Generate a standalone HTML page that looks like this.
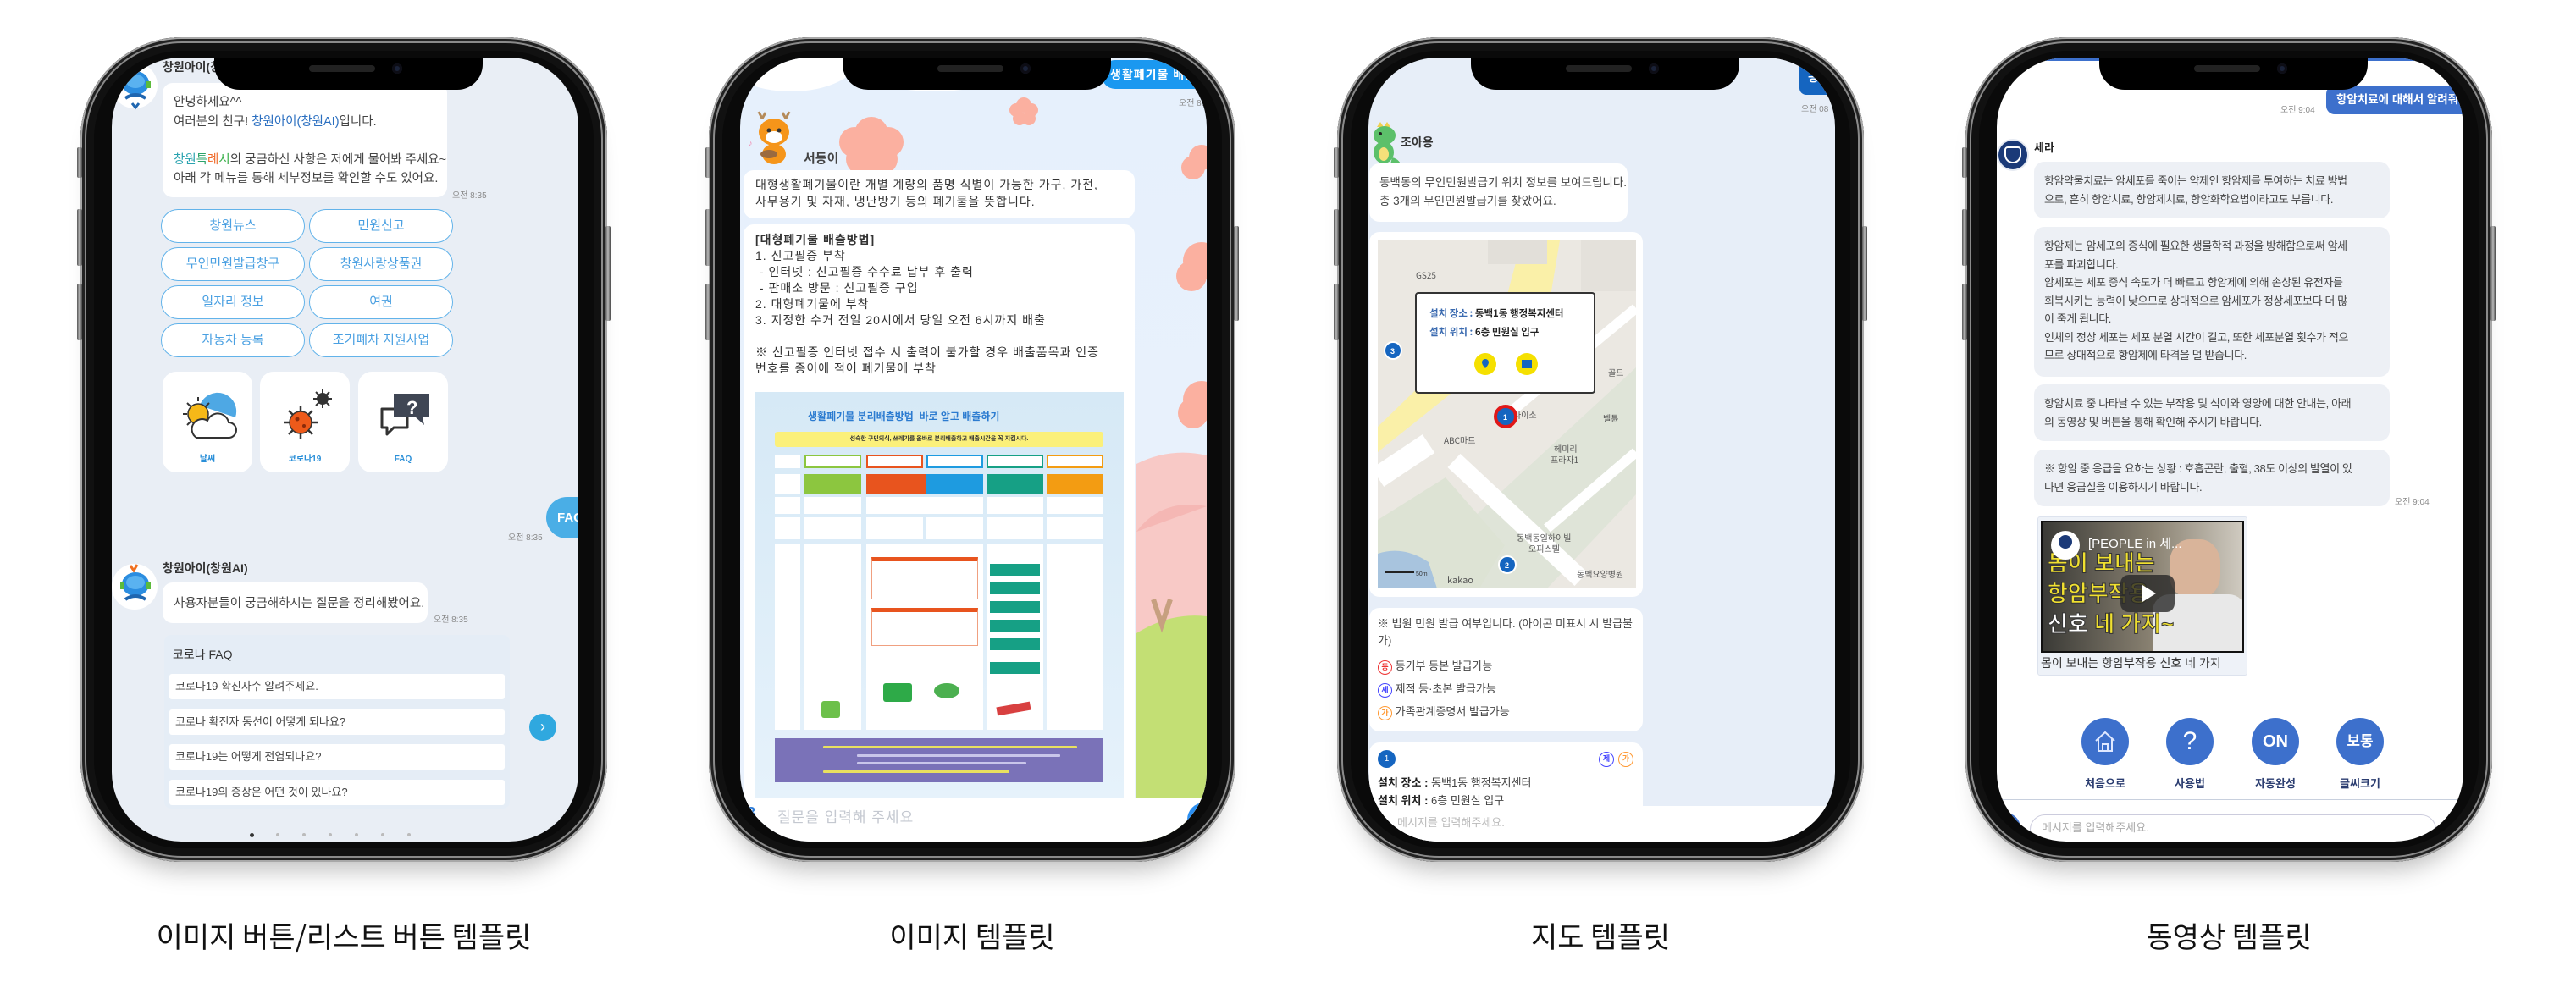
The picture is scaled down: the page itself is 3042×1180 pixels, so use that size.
<!DOCTYPE html>
<html><head><meta charset="utf-8">
<style>
*{margin:0;padding:0;box-sizing:border-box}
body{width:3042px;height:1180px;background:#fff;position:relative;overflow:hidden;font-family:"Liberation Sans","Noto Sans CJK KR",sans-serif;color:#333}
.ph{position:absolute;top:44px;width:622px;height:974px;border-radius:120px;background:#0a0a0a;box-shadow:inset 0 0 0 2px #a8a8a8,inset 0 0 0 5px #222,inset 0 0 0 7px #8a8a8a,inset 0 0 0 16px #111,0 26px 30px -18px rgba(0,0,0,.28)}
.btn{position:absolute;width:6px;background:linear-gradient(90deg,#555,#bbb,#444);border-radius:2px}
.scr{position:absolute;left:37px;top:24px;width:551px;height:926px;border-radius:82px;overflow:hidden}
.notch{position:absolute;left:121px;top:0;width:317px;height:38px;background:#000;border-radius:0 0 30px 30px;z-index:20}
.notch:before{content:"";position:absolute;left:112px;top:9px;width:78px;height:8px;border-radius:4px;background:#222}
.notch:after{content:"";position:absolute;left:210px;top:7px;width:12px;height:12px;border-radius:50%;background:#1a2238;box-shadow:inset 0 0 0 3px #0d0d15}
.t{position:absolute;white-space:nowrap}
.lbl{position:absolute;top:1080px;width:622px;text-align:center;font-size:34px;color:#111;font-family:"Noto Sans CJK KR",sans-serif}
.bub{position:absolute;background:#fff;border-radius:12px}
.ob{position:absolute;height:40px;border:1.5px solid #62b3ea;border-radius:20px;color:#4aa0e2;font-size:15px;text-align:center;line-height:37px;background:#fff}
.card{position:absolute;top:371px;width:106px;height:119px;background:#fff;border-radius:16px}
.card span{position:absolute;bottom:10px;width:100%;text-align:center;font-size:10px;font-weight:bold;color:#2a8fd8}
.tm{position:absolute;font-size:10px;color:#8a8a8a;white-space:nowrap}
.fq{position:absolute;left:6px;width:396px;height:30px;background:#fff;border-radius:3px;font-size:13px;line-height:30px;padding-left:7px;color:#444}
.g{position:absolute;background:#ccd;height:3px;border-radius:1px}
.gb{position:absolute;background:#edf0f5;border-radius:12px;left:44px;width:420px;font-size:13px;letter-spacing:-0.4px;line-height:21.5px;color:#444;padding:12px 12px;white-space:nowrap;overflow:hidden}
.cb{position:absolute;width:56px;height:56px;border-radius:50%;background:#3d70cc;color:#fff;text-align:center;font-weight:bold}
.cl{position:absolute;width:100px;text-align:center;font-size:13px;font-weight:bold;color:#2b3d70}
</style></head><body>

<!-- ============ PHONE 1 ============ -->
<div class="ph" style="left:95px">
 <div class="btn" style="left:-4px;top:130px;height:36px"></div>
 <div class="btn" style="left:-4px;top:203px;height:67px"></div>
 <div class="btn" style="left:-4px;top:291px;height:67px"></div>
 <div class="btn" style="left:620px;top:223px;height:112px"></div>
 <div class="scr" style="background:#e9eef5">
  <div class="notch"></div>
  <div style="position:absolute;left:0;top:6px;width:54px;height:54px;border-radius:50%;background:#fff"></div>
  <svg style="position:absolute;left:2px;top:4px" width="54" height="60" viewBox="0 0 54 60"><path d="M20 4l4 6 4-7" stroke="#f07020" stroke-width="3" fill="none"/><ellipse cx="26" cy="26" rx="16" ry="14" fill="#2b8de0"/><ellipse cx="26" cy="24" rx="11" ry="8" fill="#5ab2f0"/><rect x="8" y="24" width="5" height="8" fill="#5cbb3c"/><rect x="39" y="24" width="5" height="8" fill="#5cbb3c"/><path d="M14 44q12-8 24 0" stroke="#1f66b0" stroke-width="4" fill="none"/><path d="M22 50l4 5 4-5" stroke="#1f66b0" stroke-width="3" fill="none"/></svg>
  <div class="t" style="left:60px;top:1px;font-size:14px;font-weight:bold;color:#333">창원아이(창원AI)</div>
  <div class="bub" style="left:60px;top:30px;width:336px;height:135px"></div>
  <div class="t" style="left:73px;top:42px;font-size:14.5px;line-height:22.5px;color:#444">안녕하세요^^<br>여러분의 친구! <span style="color:#2b6fc0">창원아이(창원AI)</span>입니다.<br><br><span style="color:#2aa3b0">창원</span><span style="color:#2aa36a">특</span><span style="color:#f06a2a">례</span><span style="color:#3ab04a">시</span>의 궁금하신 사항은 저에게 물어봐 주세요~<br>아래 각 메뉴를 통해 세부정보를 확인할 수도 있어요.</div>
  <div class="tm" style="left:402px;top:154px">오전 8:35</div>
  <div class="ob" style="left:58px;top:179px;width:170px">창원뉴스</div>
  <div class="ob" style="left:233px;top:179px;width:170px">민원신고</div>
  <div class="ob" style="left:58px;top:224px;width:170px">무인민원발급창구</div>
  <div class="ob" style="left:233px;top:224px;width:170px">창원사랑상품권</div>
  <div class="ob" style="left:58px;top:269px;width:170px">일자리 정보</div>
  <div class="ob" style="left:233px;top:269px;width:170px">여권</div>
  <div class="ob" style="left:58px;top:314px;width:170px">자동차 등록</div>
  <div class="ob" style="left:233px;top:314px;width:170px">조기폐차 지원사업</div>
  <div class="card" style="left:60px"><svg style="position:absolute;left:18px;top:22px" width="72" height="66" viewBox="0 0 72 66"><path d="M26 18a22 22 0 0 1 42 14" fill="#4ea8e4"/><circle cx="24" cy="28" r="12" fill="#f6b818" stroke="#333" stroke-width="1.5"/><g stroke="#333" stroke-width="2"><path d="M24 8v5M6 28h5M11 15l4 4M11 41l4-4M37 15l-4 4"/></g><path d="M22 56h38a9 9 0 0 0 0-18a13 13 0 0 0-25-2a10 10 0 0 0-13 20z" fill="#fff" stroke="#333" stroke-width="2"/></svg><span>날씨</span></div>
  <div class="card" style="left:175px"><svg style="position:absolute;left:18px;top:18px" width="72" height="72" viewBox="0 0 72 72"><circle cx="56" cy="14" r="7" fill="#333"/><g stroke="#333" stroke-width="2"><path d="M56 3v22M45 14h22M48 6l16 16M64 6l-16 16"/></g><g stroke="#333" stroke-width="2.5"><path d="M30 22v40M10 42h40M16 28l28 28M44 28l-28 28"/></g><circle cx="30" cy="42" r="13" fill="#ee5a1a" stroke="#333" stroke-width="1.5"/><circle cx="26" cy="38" r="2.5" fill="#8a2a0a"/><circle cx="34" cy="46" r="2" fill="#8a2a0a"/></svg><span>코로나19</span></div>
  <div class="card" style="left:291px"><svg style="position:absolute;left:20px;top:22px" width="70" height="60" viewBox="0 0 70 60"><path d="M8 22h30v22H22l-8 8v-8H8z" fill="#fff" stroke="#333" stroke-width="3" stroke-linejoin="round"/><path d="M22 4h42v28h-8l2 9-10-9H22z" fill="#3f4654"/><text x="37" y="28" font-size="22" font-weight="bold" fill="#fff" font-family="Liberation Sans">?</text></svg><span>FAQ</span></div>
  <div style="position:absolute;left:513px;top:519px;width:60px;height:49px;border-radius:25px;background:#4aaee6;color:#fff;font-weight:bold;font-size:15px;line-height:49px;padding-left:13px">FAQ</div>
  <div class="tm" style="left:468px;top:558px">오전 8:35</div>
  <div style="position:absolute;left:0;top:598px;width:54px;height:54px;border-radius:50%;background:#fff"></div>
  <svg style="position:absolute;left:2px;top:596px" width="54" height="60" viewBox="0 0 54 60"><path d="M20 4l4 6 4-7" stroke="#f07020" stroke-width="3" fill="none"/><ellipse cx="26" cy="26" rx="16" ry="14" fill="#2b8de0"/><ellipse cx="26" cy="24" rx="11" ry="8" fill="#5ab2f0"/><rect x="8" y="24" width="5" height="8" fill="#5cbb3c"/><rect x="39" y="24" width="5" height="8" fill="#5cbb3c"/><path d="M14 44q12-8 24 0" stroke="#1f66b0" stroke-width="4" fill="none"/></svg>
  <div class="t" style="left:60px;top:593px;font-size:14px;font-weight:bold;color:#333">창원아이(창원AI)</div>
  <div class="bub" style="left:60px;top:620px;width:313px;height:48px"></div>
  <div class="t" style="left:73px;top:633px;font-size:14.5px;color:#444">사용자분들이 궁금해하시는 질문을 정리해봤어요.</div>
  <div class="tm" style="left:380px;top:655px">오전 8:35</div>
  <div style="position:absolute;left:62px;top:682px;width:408px;height:205px;background:#e5edf6;border-radius:8px">
   <div class="t" style="left:10px;top:13px;font-size:14px;color:#333">코로나 FAQ</div>
   <div class="fq" style="top:46px">코로나19 확진자수 알려주세요.</div>
   <div class="fq" style="top:88px">코로나 확진자 동선이 어떻게 되나요?</div>
   <div class="fq" style="top:129px">코로나19는 어떻게 전염되나요?</div>
   <div class="fq" style="top:171px">코로나19의 증상은 어떤 것이 있나요?</div>
  </div>
  <div style="position:absolute;left:493px;top:775px;width:32px;height:32px;border-radius:50%;background:#2fa8df;color:#fff;text-align:center;line-height:30px;font-size:18px">&#8250;</div>
  <div style="position:absolute;left:163px;top:916px;width:5px;height:5px;border-radius:50%;background:#333"></div>
  <div style="position:absolute;left:194px;top:916px;width:4px;height:4px;border-radius:50%;background:#bbb;box-shadow:31px 0 #bbb,62px 0 #bbb,93px 0 #bbb,124px 0 #bbb,155px 0 #bbb"></div>
 </div>
</div>

<!-- ============ PHONE 2 ============ -->
<div class="ph" style="left:837px">
 <div class="btn" style="left:-4px;top:130px;height:36px"></div>
 <div class="btn" style="left:-4px;top:203px;height:67px"></div>
 <div class="btn" style="left:-4px;top:291px;height:67px"></div>
 <div class="btn" style="left:620px;top:223px;height:112px"></div>
 <div class="scr" style="background:linear-gradient(#e6f0fc,#eaf2fd)">
  <div class="notch"></div>
  <div style="position:absolute;left:-20px;top:-40px;width:160px;height:80px;border-radius:50%;background:#fff"></div>
  <div style="position:absolute;left:120px;top:-50px;width:220px;height:90px;border-radius:50%;background:#fff"></div>
  <div style="position:absolute;left:300px;top:-40px;width:140px;height:70px;border-radius:50%;background:#fff"></div>
  <svg style="position:absolute;left:0;top:0" width="551" height="926"><g fill="#fbb0a0"><circle cx="155" cy="90" r="20"/><circle cx="135" cy="100" r="18"/><circle cx="175" cy="100" r="18"/><circle cx="143" cy="120" r="18"/><circle cx="168" cy="120" r="18"/><circle cx="155" cy="105" r="20"/><circle cx="335" cy="56" r="9"/><circle cx="326" cy="62" r="8"/><circle cx="344" cy="62" r="8"/><circle cx="330" cy="72" r="8"/><circle cx="341" cy="72" r="8"/><circle cx="545" cy="118" r="15"/><circle cx="535" cy="130" r="14"/><circle cx="545" cy="240" r="22"/><circle cx="533" cy="258" r="18"/><circle cx="545" cy="404" r="22"/><circle cx="535" cy="420" r="18"/></g>
  <path d="M468 480q40-20 83-10v240h-83z" fill="#f8c9c6"/><path d="M468 560q30-40 83-30" fill="#f5b7b4"/>
  <path d="M468 680q40-25 83-20v266h-83z" fill="#c3df74"/>
  <path d="M488 640l10 30 10-30" stroke="#c7a080" stroke-width="6" fill="none"/></svg>
  <div style="position:absolute;left:427px;top:3px;width:150px;height:34px;border-radius:16px 0 0 16px;background:#1a98f0;color:#fff;font-size:14px;line-height:34px;padding-left:10px;letter-spacing:1px;font-weight:bold">생활폐기물 배출 안내</div>
  <div class="tm" style="left:518px;top:45px">오전 8:</div>
  <svg style="position:absolute;left:10px;top:62px" width="62" height="68" viewBox="0 0 62 68"><path d="M16 10l-4-8M16 10l4-7M44 10l4-8M44 10l-4-7" stroke="#b58b5a" stroke-width="3"/><ellipse cx="30" cy="26" rx="18" ry="16" fill="#f5951a"/><ellipse cx="30" cy="32" rx="10" ry="7" fill="#fff"/><circle cx="24" cy="24" r="2.5" fill="#333"/><circle cx="36" cy="24" r="2.5" fill="#333"/><ellipse cx="30" cy="52" rx="14" ry="12" fill="#f5951a"/><ellipse cx="24" cy="52" rx="10" ry="5" fill="#9a6a40"/><text x="0" y="42" font-size="9" fill="#f08ab0">♪</text></svg>
  <div class="t" style="left:75px;top:108px;font-size:15px;font-weight:bold;color:#444">서동이</div>
  <div class="bub" style="left:4px;top:133px;width:462px;height:57px"></div>
  <div class="t" style="left:18px;top:141px;font-size:14px;line-height:19.5px;color:#333;letter-spacing:1px">대형생활폐기물이란 개별 계량의 품명 식별이 가능한 가구, 가전,<br>사무용기 및 자재, 냉난방기 등의 폐기물을 뜻합니다.</div>
  <div class="bub" style="left:4px;top:197px;width:462px;height:700px"></div>
  <div class="t" style="left:18px;top:206px;font-size:14px;line-height:19px;color:#333;letter-spacing:1px"><b>[대형폐기물 배출방법]</b><br>1. 신고필증 부착<br>&nbsp;- 인터넷 : 신고필증 수수료 납부 후 출력<br>&nbsp;- 판매소 방문 : 신고필증 구입<br>2. 대형폐기물에 부착<br>3. 지정한 수거 전일 20시에서 당일 오전 6시까지 배출<br><br>※ 신고필증 인터넷 접수 시 출력이 불가할 경우 배출품목과 인증<br>번호를 종이에 적어 폐기물에 부착</div>
  <div style="position:absolute;left:18px;top:395px;width:435px;height:490px;background:linear-gradient(#d6e9f6,#e6f2fb)">
   <div class="t" style="left:62px;top:20px;font-size:12px;font-weight:bold;color:#2b7bd0">생활폐기물 분리배출방법 &nbsp;바로 알고 배출하기</div>
   <div style="position:absolute;left:23px;top:47px;width:388px;height:18px;background:#fbf07a;border-radius:3px;font-size:7px;font-weight:bold;text-align:center;line-height:18px;color:#333">성숙한 구민의식, 쓰레기를 올바로 분리배출하고 배출시간을 꼭 지킵시다.</div>
   <div style="position:absolute;left:23px;top:74px;width:30px;height:16px;background:#fff"></div>
   <div style="position:absolute;left:58px;top:74px;width:67px;height:16px;border:2px solid #8cc63f;background:#fff"></div>
   <div style="position:absolute;left:131px;top:74px;width:67px;height:16px;border:2px solid #e8541e;background:#fff"></div>
   <div style="position:absolute;left:202px;top:74px;width:67px;height:16px;border:2px solid #1e9be0;background:#fff"></div>
   <div style="position:absolute;left:273px;top:74px;width:67px;height:16px;border:2px solid #16a085;background:#fff"></div>
   <div style="position:absolute;left:344px;top:74px;width:67px;height:16px;border:2px solid #f39c12;background:#fff"></div>
   <div style="position:absolute;left:23px;top:97px;width:30px;height:23px;background:#fff"></div>
   <div style="position:absolute;left:58px;top:97px;width:67px;height:23px;background:#8cc63f"></div>
   <div style="position:absolute;left:131px;top:97px;width:71px;height:23px;background:#e8541e"></div>
   <div style="position:absolute;left:202px;top:97px;width:67px;height:23px;background:#1e9be0"></div>
   <div style="position:absolute;left:273px;top:97px;width:67px;height:23px;background:#16a085"></div>
   <div style="position:absolute;left:344px;top:97px;width:67px;height:23px;background:#f39c12"></div>
   <div style="position:absolute;left:23px;top:124px;width:30px;height:20px;background:#fff"></div>
   <div style="position:absolute;left:58px;top:124px;width:67px;height:20px;background:#fff"></div>
   <div style="position:absolute;left:131px;top:124px;width:138px;height:20px;background:#fff"></div>
   <div style="position:absolute;left:273px;top:124px;width:67px;height:20px;background:#fff"></div>
   <div style="position:absolute;left:344px;top:124px;width:67px;height:20px;background:#fff"></div>
   <div style="position:absolute;left:23px;top:148px;width:30px;height:26px;background:#fff"></div>
   <div style="position:absolute;left:58px;top:148px;width:67px;height:26px;background:#fff"></div>
   <div style="position:absolute;left:131px;top:148px;width:67px;height:26px;background:#fff"></div>
   <div style="position:absolute;left:202px;top:148px;width:67px;height:26px;background:#fff"></div>
   <div style="position:absolute;left:273px;top:148px;width:67px;height:26px;background:#fff"></div>
   <div style="position:absolute;left:344px;top:148px;width:67px;height:26px;background:#fff"></div>
   <div style="position:absolute;left:23px;top:179px;width:30px;height:220px;background:#fff"></div>
   <div style="position:absolute;left:58px;top:179px;width:67px;height:220px;background:#fff"></div>
   <div style="position:absolute;left:131px;top:179px;width:138px;height:220px;background:#fff">
    <div style="position:absolute;left:6px;top:16px;width:126px;height:50px;border:1px solid #f0a080;border-top:5px solid #e8541e"></div>
    <div style="position:absolute;left:6px;top:76px;width:126px;height:45px;border:1px solid #f0a080;border-top:5px solid #e8541e"></div>
    <div style="position:absolute;left:20px;top:165px;width:34px;height:22px;background:#2eaa48;border-radius:3px"></div>
    <div style="position:absolute;left:80px;top:165px;width:30px;height:18px;background:#4cb050;border-radius:50%"></div>
   </div>
   <div style="position:absolute;left:273px;top:179px;width:67px;height:220px;background:#fff">
    <div style="position:absolute;left:4px;top:24px;width:59px;height:14px;background:#16a085"></div>
    <div style="position:absolute;left:4px;top:46px;width:59px;height:14px;background:#16a085"></div>
    <div style="position:absolute;left:4px;top:68px;width:59px;height:14px;background:#16a085"></div>
    <div style="position:absolute;left:4px;top:90px;width:59px;height:14px;background:#16a085"></div>
    <div style="position:absolute;left:4px;top:112px;width:59px;height:14px;background:#16a085"></div>
    <div style="position:absolute;left:4px;top:140px;width:59px;height:14px;background:#16a085"></div>
    <div style="position:absolute;left:12px;top:190px;width:40px;height:10px;background:#d84040;transform:rotate(-10deg)"></div>
   </div>
   <div style="position:absolute;left:344px;top:179px;width:67px;height:220px;background:#fff"></div>
   <div style="position:absolute;left:78px;top:365px;width:22px;height:20px;background:#6cc04a;border-radius:3px"></div>
   <div style="position:absolute;left:23px;top:409px;width:388px;height:52px;background:#7a72b8"></div>
   <div class="g" style="left:80px;top:418px;width:300px;background:#e8e060"></div>
   <div class="g" style="left:120px;top:428px;width:240px;background:#c9c6ea"></div>
   <div class="g" style="left:120px;top:437px;width:200px;background:#c9c6ea"></div>
   <div class="g" style="left:80px;top:447px;width:220px;background:#e8e060"></div>
  </div>
  <div style="position:absolute;left:0;top:875px;width:551px;height:51px;background:#fff"></div>
  <div class="t" style="left:-2px;top:882px;font-size:18px;font-weight:bold;color:#2a7ad8">88</div>
  <div class="t" style="left:44px;top:883px;font-size:17px;color:#c4c8d0;letter-spacing:1px">질문을 입력해 주세요</div>
  <div style="position:absolute;left:528px;top:880px;width:40px;height:40px;border-radius:50%;background:#2a8ef0"></div>
 </div>
</div>

<!-- ============ PHONE 3 ============ -->
<div class="ph" style="left:1579px">
 <div class="btn" style="left:-4px;top:130px;height:36px"></div>
 <div class="btn" style="left:-4px;top:203px;height:67px"></div>
 <div class="btn" style="left:-4px;top:291px;height:67px"></div>
 <div class="btn" style="left:620px;top:223px;height:112px"></div>
 <div class="scr" style="background:#e7eef8">
  <div class="notch"></div>
  <div style="position:absolute;left:509px;top:3px;width:60px;height:41px;border-radius:8px;background:#1565c0;color:#fff;font-size:14px;font-weight:bold;padding:10px 0 0 10px">동백</div>
  <div class="tm" style="left:511px;top:52px">오전 08</div>
  <svg style="position:absolute;left:2px;top:74px" width="36" height="52" viewBox="0 0 36 52"><path d="M8 8l4-6 4 6 4-6 4 6" fill="#f0d050"/><ellipse cx="17" cy="18" rx="13" ry="11" fill="#5cc06a"/><circle cx="12" cy="16" r="2" fill="#222"/><ellipse cx="16" cy="38" rx="12" ry="13" fill="#5cc06a"/><ellipse cx="16" cy="40" rx="6" ry="8" fill="#f5e07a"/><path d="M26 44q8 2 10 8h-12z" fill="#5cc06a"/></svg>
  <div class="t" style="left:38px;top:90px;font-size:14px;font-weight:bold;color:#333">조아용</div>
  <div class="bub" style="left:1px;top:125px;width:305px;height:69px"></div>
  <div class="t" style="left:13px;top:137px;font-size:13.5px;line-height:22px;color:#444">동백동의 무인민원발급기 위치 정보를 보여드립니다.<br>총 3개의 무인민원발급기를 찾았어요.</div>
  <div class="bub" style="left:1px;top:206px;width:323px;height:431px"></div>
  <svg style="position:absolute;left:11px;top:216px" width="305" height="411" viewBox="0 0 305 411">
   <rect width="305" height="411" fill="#ebe8e2"/>
   <path d="M110 330 L305 150 L305 300 L200 411 L60 411 Z" fill="#dfe4d8"/>
   <path d="M0 330 L80 280 L150 360 L120 411 L0 411Z" fill="#dde3d4"/>
   <path d="M0 370 Q30 360 60 380 L70 411 L0 411Z" fill="#a8c4de"/>
   <path d="M0 250 L200 90 L215 0 L170 0 L150 75 L0 220Z" fill="#faf0a8"/>
   <path d="M0 280 L60 240" stroke="#fff" stroke-width="26"/>
   <path d="M90 260 L240 400" stroke="#fff" stroke-width="22"/>
   <path d="M160 200 L305 80" stroke="#fff" stroke-width="12"/>
   <path d="M200 340 L305 250" stroke="#fff" stroke-width="12"/>
   <rect x="240" y="0" width="65" height="60" fill="#e4e1db"/>
   <rect x="130" y="0" width="70" height="28" fill="#e2dfd9"/>
   <g font-family="Noto Sans CJK KR,sans-serif" font-size="10" fill="#555"><text x="45" y="45">GS25</text><text x="160" y="75" fill="#3a6ab0">동백이마트</text><text x="165" y="87" fill="#3a6ab0">사거리</text><text x="160" y="210">다이소</text><text x="78" y="240">ABC마트</text><text x="208" y="250">헤미리</text><text x="204" y="263">프라자1</text><text x="266" y="214">벨튠</text><text x="272" y="160">골드</text><text x="164" y="355">동백동일하이빌</text><text x="178" y="368">오피스텔</text><text x="235" y="398">동백요양병원</text><text x="82" y="405" font-size="11">kakao</text></g>
   <path d="M8 392h35" stroke="#222" stroke-width="2"/><text x="45" y="396" font-size="7" fill="#333">50m</text>
   <circle cx="18" cy="130" r="10" fill="#1565c0" stroke="#fff" stroke-width="2"/><text x="15" y="134" font-size="9" fill="#fff" font-weight="bold">3</text>
   <circle cx="153" cy="383" r="10" fill="#1565c0" stroke="#fff" stroke-width="2"/><text x="150" y="387" font-size="9" fill="#fff" font-weight="bold">2</text>
   <circle cx="151" cy="208" r="12" fill="#1565c0" stroke="#e01818" stroke-width="4"/><text x="148" y="212" font-size="9" fill="#fff" font-weight="bold">1</text>
   <rect x="45" y="62" width="211" height="118" fill="#fff" stroke="#333" stroke-width="2" rx="3"/>
   <g font-family="Noto Sans CJK KR,sans-serif" font-size="11.5" font-weight="bold"><text x="61" y="90" fill="#3a6ab0">설치 장소 : <tspan fill="#222">동백1동 행정복지센터</tspan></text><text x="61" y="112" fill="#3a6ab0">설치 위치 : <tspan fill="#222">6층 민원실 입구</tspan></text></g>
   <circle cx="127" cy="146" r="13" fill="#f5e000"/><circle cx="176" cy="146" r="13" fill="#f5e000"/><path d="M127 140a4 4 0 0 1 4 4c0 3-4 7-4 7s-4-4-4-7a4 4 0 0 1 4-4z" fill="#1565c0"/><path d="M170 141h12v10h-12z" fill="#1565c0"/>
  </svg>
  <div class="bub" style="left:1px;top:650px;width:323px;height:146px"></div>
  <div class="t" style="left:11px;top:659px;font-size:13px;line-height:20px;color:#444">※ 법원 민원 발급 여부입니다. (아이콘 미표시 시 발급불<br>가)</div>
  <div class="t" style="left:11px;top:705px;font-size:13px;line-height:27px;color:#444"><span style="display:inline-block;width:17px;height:17px;border:1.5px solid #e33;border-radius:50%;color:#e33;font-size:9px;text-align:center;line-height:14px;font-weight:bold">등</span> 등기부 등본 발급가능<br><span style="display:inline-block;width:17px;height:17px;border:1.5px solid #44f;border-radius:50%;color:#44f;font-size:9px;text-align:center;line-height:14px;font-weight:bold">제</span> 제적 등·초본 발급가능<br><span style="display:inline-block;width:17px;height:17px;border:1.5px solid #f93;border-radius:50%;color:#f93;font-size:9px;text-align:center;line-height:14px;font-weight:bold">가</span> 가족관계증명서 발급가능</div>
  <div class="bub" style="left:1px;top:809px;width:323px;height:120px"></div>
  <div style="position:absolute;left:11px;top:818px;width:21px;height:21px;border-radius:50%;background:#1565c0;color:#fff;font-size:10px;text-align:center;line-height:21px">1</div>
  <div style="position:absolute;left:272px;top:820px;width:18px;height:18px;border:1.5px solid #44f;border-radius:50%;color:#44f;font-size:9px;text-align:center;line-height:15px;font-weight:bold">제</div>
  <div style="position:absolute;left:295px;top:820px;width:18px;height:18px;border:1.5px solid #f93;border-radius:50%;color:#f93;font-size:9px;text-align:center;line-height:15px;font-weight:bold">가</div>
  <div class="t" style="left:11px;top:846px;font-size:13px;line-height:21px;color:#444"><b style="color:#222">설치 장소 :</b> 동백1동 행정복지센터<br><b style="color:#222">설치 위치 :</b> 6층 민원실 입구</div>
  <div style="position:absolute;left:0;top:884px;width:551px;height:42px;background:#fff"></div>
  <div style="position:absolute;left:0;top:890px;width:10px;height:14px;background:#1565c0"></div>
  <div class="t" style="left:34px;top:893px;font-size:13px;color:#bbb">메시지를 입력해주세요.</div>
 </div>
</div>

<!-- ============ PHONE 4 ============ -->
<div class="ph" style="left:2321px">
 <div class="btn" style="left:-4px;top:130px;height:36px"></div>
 <div class="btn" style="left:-4px;top:203px;height:67px"></div>
 <div class="btn" style="left:-4px;top:291px;height:67px"></div>
 <div class="btn" style="left:620px;top:223px;height:112px"></div>
 <div class="scr" style="background:#fff">
  <div class="notch"></div>
  <div style="position:absolute;left:0;top:0;width:551px;height:4px;background:#3d70cc"></div>
  <div style="position:absolute;left:389px;top:33px;width:170px;height:34px;border-radius:10px 0 0 10px;background:#3d70cc;color:#fff;font-size:13.5px;line-height:34px;padding-left:12px;font-weight:bold;white-space:nowrap;overflow:hidden">항암치료에 대해서 알려줘</div>
  <div class="tm" style="left:335px;top:53px">오전 9:04</div>
  <div style="position:absolute;left:0;top:96px;width:38px;height:38px;border-radius:50%;background:#1b3a78;border:2px solid #e6eaf2"></div>
  <div style="position:absolute;left:9px;top:105px;width:20px;height:20px;border-radius:4px 4px 10px 10px;border:2px solid #fff"></div>
  <div class="t" style="left:44px;top:96px;font-size:13px;font-weight:bold;color:#222">세라</div>
  <div class="gb" style="top:123px;height:67px">항암약물치료는 암세포를 죽이는 약제인 항암제를 투여하는 치료 방법<br>으로, 흔히 항암치료, 항암제치료, 항암화학요법이라고도 부릅니다.</div>
  <div class="gb" style="top:200px;height:177px">항암제는 암세포의 증식에 필요한 생물학적 과정을 방해함으로써 암세<br>포를 파괴합니다.<br>암세포는 세포 증식 속도가 더 빠르고 항암제에 의해 손상된 유전자를<br>회복시키는 능력이 낮으므로 상대적으로 암세포가 정상세포보다 더 많<br>이 죽게 됩니다.<br>인체의 정상 세포는 세포 분열 시간이 길고, 또한 세포분열 횟수가 적으<br>므로 상대적으로 항암제에 타격을 덜 받습니다.</div>
  <div class="gb" style="top:386px;height:67px">항암치료 중 나타날 수 있는 부작용 및 식이와 영양에 대한 안내는, 아래<br>의 동영상 및 버튼을 통해 확인해 주시기 바랍니다.</div>
  <div class="gb" style="top:463px;height:67px">※ 항암 중 응급을 요하는 상황 : 호흡곤란, 출혈, 38도 이상의 발열이 있<br>다면 응급실을 이용하시기 바랍니다.</div>
  <div class="tm" style="left:470px;top:516px">오전 9:04</div>
  <div style="position:absolute;left:48px;top:542px;width:248px;height:188px;background:#eef2f8;border:1px solid #dde3ee;border-radius:3px"></div>
  <div style="position:absolute;left:52px;top:547px;width:240px;height:156px;background:linear-gradient(90deg,#3a3a36,#8a8272 55%,#cfcac0);border:2px solid #111;overflow:hidden">
   <div style="position:absolute;left:150px;top:20px;width:60px;height:70px;border-radius:40%;background:#d9b49a"></div>
   <div style="position:absolute;left:130px;top:85px;width:110px;height:80px;background:#e8e8e8;border-radius:20px 20px 0 0"></div>
   <div class="t" style="left:6px;top:30px;font-size:26px;font-weight:bold;color:#f0e030;line-height:36px;-webkit-text-stroke:1px #333">몸이 보내는<br>항암부작용<br><span style="color:#fff">신호</span> 네 가지~</div>
   <div style="position:absolute;left:10px;top:10px;width:34px;height:34px;border-radius:50%;background:#fff"></div>
   <div style="position:absolute;left:19px;top:15px;width:16px;height:16px;border-radius:50%;background:#1b3a78"></div>
   <div class="t" style="left:54px;top:14px;font-size:15px;color:#fff">[PEOPLE in 세...</div>
   <div style="position:absolute;left:92px;top:62px;width:64px;height:44px;border-radius:10px;background:rgba(40,40,40,.8)"></div>
   <div style="position:absolute;left:118px;top:74px;width:0;height:0;border-left:16px solid #fff;border-top:10px solid transparent;border-bottom:10px solid transparent"></div>
  </div>
  <div class="t" style="left:52px;top:705px;font-size:14px;color:#333">몸이 보내는 항암부작용 신호 네 가지</div>
  <div class="cb" style="left:100px;top:780px"><svg style="margin-top:14px" width="28" height="28" viewBox="0 0 28 28"><path d="M3 13L14 3l11 10M6 11v14h16V11M11 25v-8h6v8" stroke="#dfe8ff" stroke-width="2" fill="none"/></svg></div>
  <div class="cb" style="left:200px;top:780px;font-size:30px;line-height:56px;font-weight:normal">?</div>
  <div class="cb" style="left:301px;top:780px;font-size:20px;line-height:56px">ON</div>
  <div class="cb" style="left:401px;top:780px;font-size:17px;line-height:56px">보통</div>
  <div class="cl" style="left:78px;top:847px">처음으로</div>
  <div class="cl" style="left:178px;top:847px">사용법</div>
  <div class="cl" style="left:279px;top:847px">자동완성</div>
  <div class="cl" style="left:379px;top:847px">글씨크기</div>
  <div style="position:absolute;left:0;top:876px;width:551px;height:1px;background:#c8d0de"></div>
  <div style="position:absolute;left:-8px;top:892px;width:36px;height:36px;border-radius:50%;background:#3d70cc"></div>
  <div style="position:absolute;left:39px;top:894px;width:480px;height:40px;border:1px solid #ccd;border-radius:18px"></div>
  <div class="t" style="left:53px;top:899px;font-size:13px;color:#aaa">메시지를 입력해주세요.</div>
  <div style="position:absolute;left:527px;top:893px;width:34px;height:34px;border-radius:50%;background:#b8bcc6"></div>
 </div>
</div>

<div class="lbl" style="left:95px">이미지 버튼/리스트 버튼 템플릿</div>
<div class="lbl" style="left:837px">이미지 템플릿</div>
<div class="lbl" style="left:1579px">지도 템플릿</div>
<div class="lbl" style="left:2321px">동영상 템플릿</div>
</body></html>
